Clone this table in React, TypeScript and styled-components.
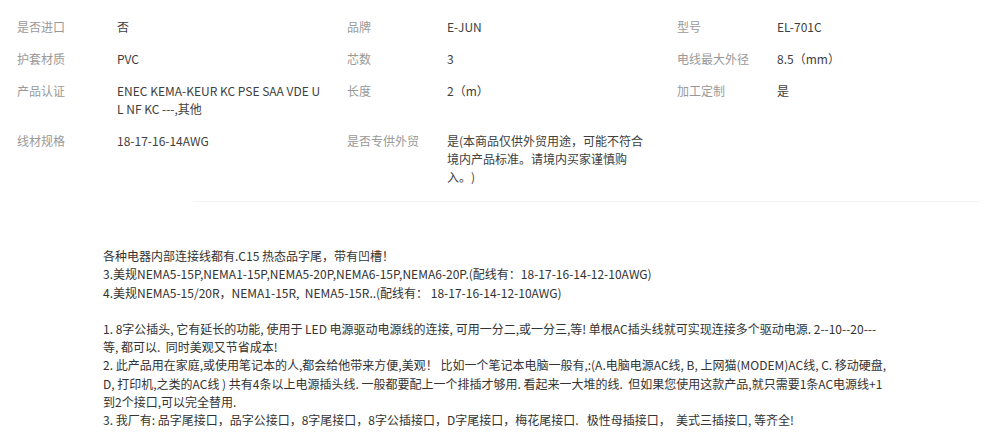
import React from "react";
import styled, { createGlobalStyle } from "styled-components";

const GlobalStyle = createGlobalStyle`
  html, body {
    margin: 0;
    padding: 0;
    background: #fff;
  }
  body {
    font-family: "Noto Sans CJK SC", "Liberation Sans", sans-serif;
    font-size: 12px;
    color: #333;
  }
`;

const Page = styled.div`
  width: 991px;
  height: 444px;
  overflow: hidden;
`;

const AttrGrid = styled.ul`
  list-style: none;
  margin: 0;
  padding: 11px 0 0 17px;
  display: grid;
  grid-template-columns: repeat(3, 330px);
`;

const AttrItem = styled.li`
  display: flex;
  padding: 7px 0;
  line-height: 18px;
`;

const AttrLabel = styled.span`
  flex: 0 0 100px;
  color: #999;
`;

const AttrValue = styled.span`
  width: 206px;
  color: #404040;
  word-break: break-all;
  text-spacing-trim: space-all;
`;

const Divider = styled.div`
  height: 1px;
  margin: 8px 11px 0 193px;
  background: #f3f3f3;
`;

const Description = styled.div`
  margin-top: 45px;
  padding-left: 103px;
  width: 787px;
  line-height: 18.3px;
  color: #333;
`;

const Line = styled.p<{ $gap?: boolean }>`
  margin: 0;
  margin-top: ${(p) => (p.$gap ? "18px" : "0")};
`;

const attrs: [string, string][] = [
  ["是否进口", "否"],
  ["品牌", "E-JUN"],
  ["型号", "EL-701C"],
  ["护套材质", "PVC"],
  ["芯数", "3"],
  ["电线最大外径", "8.5（mm）"],
  ["产品认证", "ENEC KEMA-KEUR KC PSE SAA VDE UL NF KC ---,其他"],
  ["长度", "2（m）"],
  ["加工定制", "是"],
  ["线材规格", "18-17-16-14AWG"],
  ["是否专供外贸", "是(本商品仅供外贸用途，可能不符合境内产品标准。请境内买家谨慎购入。)"],
];

export default function App() {
  return (
    <Page>
      <GlobalStyle />
      <AttrGrid>
        {attrs.map(([label, value]) => (
          <AttrItem key={label}>
            <AttrLabel>{label}</AttrLabel>
            <AttrValue>{value}</AttrValue>
          </AttrItem>
        ))}
      </AttrGrid>
      <Divider />
      <Description>
        <Line>各种电器内部连接线都有.C15 热态品字尾，带有凹槽！</Line>
        <Line>
          3.美规NEMA5-15P,NEMA1-15P,NEMA5-20P,NEMA6-15P,NEMA6-20P.(配线有：18-17-16-14-12-10AWG)
        </Line>
        <Line>
          4.美规NEMA5-15/20R，NEMA1-15R,&nbsp; NEMA5-15R..(配线有： 18-17-16-14-12-10AWG)
        </Line>
        <Line $gap>
          1. 8字公插头, 它有延长的功能, 使用于 LED 电源驱动电源线的连接, 可用一分二,或一分三,等! 单根AC插头线就可实现连接多个驱动电源. 2--10--20---等, 都可以.&nbsp; 同时美观又节省成本!
        </Line>
        <Line>
          2. 此产品用在家庭,或使用笔记本的人,都会给他带来方便,美观！ 比如一个笔记本电脑一般有,:(A.电脑电源AC线, B, 上网猫(MODEM)AC线, C. 移动硬盘, D, 打印机,之类的AC线 ) 共有4条以上电源插头线. 一般都要配上一个排插才够用. 看起来一大堆的线.&nbsp; 但如果您使用这款产品,就只需要1条AC电源线+1到2个接口,可以完全替用.
        </Line>
        <Line>
          3. 我厂有: 品字尾接口，品字公接口，8字尾接口，8字公插接口，D字尾接口，梅花尾接口.&nbsp;&nbsp; 极性母插接口，&nbsp; 美式三插接口, 等齐全!
        </Line>
      </Description>
    </Page>
  );
}
